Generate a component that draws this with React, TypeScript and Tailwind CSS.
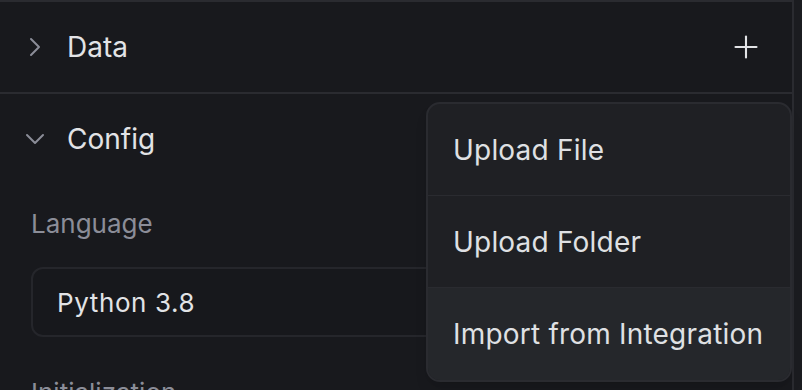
import { ChevronRight, ChevronDown, Plus } from "lucide-react";

const font = { fontFamily: "Inter, 'Noto Sans', sans-serif" };

function MenuItem({ label, active, last }: { label: string; active?: boolean; last?: boolean }) {
  return (
    <div
      className={`flex h-[92px] shrink-0 items-center px-[25px] text-[28px] tracking-[0.2px] text-[#dfe0e3] ${
        active ? "bg-[#25272b]" : ""
      } ${last ? "" : "border-b border-[#2a2b30]"}`}
    >
      {label}
    </div>
  );
}

export default function App() {
  return (
    <div style={font} className="relative flex h-[390px] w-[802px] overflow-hidden bg-[#1b1c20]">
      <div className="flex w-[794px] shrink-0 flex-col border-r-2 border-t-2 border-[#2a2b30] bg-[#18191d]">
        <div className="flex h-[92px] shrink-0 items-center justify-between border-b-2 border-[#2a2b30] pl-[19px] pr-[28px]">
          <div className="flex items-center gap-[16px]">
            <ChevronRight className="h-[32px] w-[32px] text-[#8b8d98]" strokeWidth={1.5} />
            <span className="text-[28px] leading-[34px] text-[#e2e3e6]">Data</span>
          </div>
          <Plus className="h-[36px] w-[36px] text-[#e2e3e6]" strokeWidth={1.4} />
        </div>
        <div className="flex h-[90px] shrink-0 items-center gap-[16px] pl-[19px]">
          <ChevronDown className="h-[32px] w-[32px] text-[#8b8d98]" strokeWidth={1.5} />
          <span className="text-[28px] leading-[34px] text-[#e2e3e6]">Config</span>
        </div>
        <div className="flex shrink-0 flex-col px-[31px]">
          <div className="pt-[24px] text-[26px] leading-[32px] text-[#8b8d98]">Language</div>
          <div className="mt-[27px] flex h-[70px] shrink-0 items-center rounded-[12px] border-2 border-[#25262b] bg-[#17181c] px-[24px] text-[26px] tracking-[0.6px] text-[#e2e3e6]">
            Python 3.8
          </div>
          <div className="mt-[40px] text-[26px] leading-[32px] text-[#8b8d98]">Initialization</div>
        </div>
      </div>

      <div className="absolute left-[426px] top-[102px] flex w-[366px] flex-col overflow-hidden rounded-[14px] border-2 border-[#2a2b30] bg-[#1f2024] shadow-lg">
        <MenuItem label="Upload File" />
        <MenuItem label="Upload Folder" />
        <MenuItem label="Import from Integration" active last />
      </div>
    </div>
  );
}
